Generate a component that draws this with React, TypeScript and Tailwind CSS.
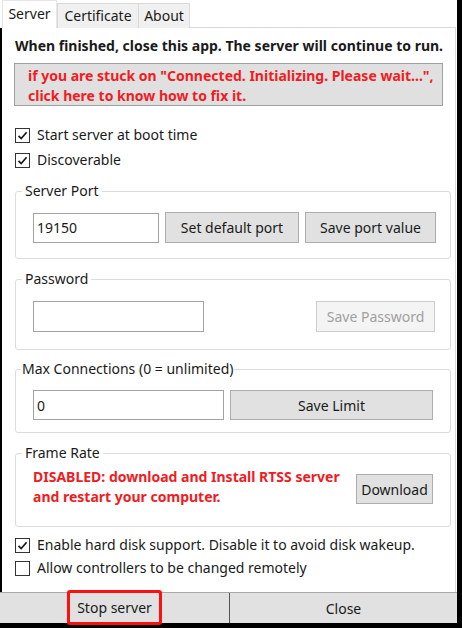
import React from "react";

function Check({ checked }: { checked: boolean }) {
  return (
    <span className="w-[15px] h-[15px] border border-[#333333] bg-white flex items-center justify-center shrink-0">
      {checked && (
        <svg width="13" height="13" viewBox="0 0 13 13">
          <path d="M2.5 6.8 L5.2 9.6 L10.6 3.2" stroke="#1a1a1a" strokeWidth="1.7" fill="none" />
        </svg>
      )}
    </span>
  );
}

function CheckRow({ checked, label, className }: { checked: boolean; label: string; className?: string }) {
  return (
    <div className={"flex items-center h-[20px] pl-[15px] gap-[7px] " + (className ?? "")}>
      <Check checked={checked} />
      <span className="leading-[20px]">{label}</span>
    </div>
  );
}

function Btn({ label, className, disabled }: { label: string; className: string; disabled?: boolean }) {
  return (
    <div
      className={
        "flex items-center justify-center border " +
        (disabled ? "bg-[#f4f4f4] border-[#cccccc] text-[#a0a0a0] " : "bg-[#e1e1e1] border-[#adadad] text-[#1a1a1a] ") +
        className
      }
    >
      {label}
    </div>
  );
}

function TextBox({ value, className }: { value: string; className: string }) {
  return (
    <div className={"flex items-center border border-[#a2a2a2] bg-white pl-[3px] " + className}>{value}</div>
  );
}

export default function App() {
  return (
    <div className="w-[462px] h-[628px] bg-black overflow-hidden font-['Noto_Sans',sans-serif] text-[14px] text-[#1a1a1a]">
      <div className="w-[457px] h-[623px] bg-white flex flex-col">
        {/* tabs */}
        <div className="flex items-end h-[28px] pl-[2px] shrink-0">
          <div className="w-[55px] h-[28px] bg-white border-t border-l border-r border-[#e6e6e6] flex items-center justify-center leading-none pb-[1px]">
            Server
          </div>
          <div className="w-[82px] h-[25px] bg-[#f0f0f0] border border-[#d9d9d9] border-b-0 flex items-center justify-center leading-none">
            Certificate
          </div>
          <div className="w-[51px] h-[25px] bg-[#f0f0f0] border border-[#d9d9d9] border-b-0 border-l-0 flex items-center justify-center leading-none">
            About
          </div>
          <div className="flex-1 h-[1px] bg-[#d9d9d9] mr-[1px]" />
        </div>

        {/* panel */}
        <div className="w-[456px] flex-1 flex flex-col border-l-2 border-l-black border-r border-r-[#d9d9d9]">
          <div className="mt-[9px] pl-[13px] font-bold leading-[18px] whitespace-nowrap">
            When finished, close this app. The server will continue to run.
          </div>
          <div className="mt-[8px] ml-[12px] w-[429px] h-[43px] bg-[#e0e0e0] border border-[#a0a0a0] pl-[13px] pt-[2px] font-bold text-[#f01c24] leading-[20px] whitespace-nowrap">
            <div>if you are stuck on "Connected. Initializing. Please wait...",</div>
            <div>click here to know how to fix it.</div>
          </div>

          <CheckRow checked label="Start server at boot time" className="mt-[19px] -ml-[2px]" />
          <CheckRow checked label="Discoverable" className="mt-[5px] -ml-[2px]" />

          {/* Server Port */}
          <fieldset className="mt-[12px] ml-[13px] w-[436px] border border-[#dcdcdc] rounded-[3px] pl-[17px] pr-[14px] pt-[12px] pb-[15px]">
            <legend className="-ml-[11px] px-[3px] leading-[18px]">Server Port</legend>
            <div className="flex items-center">
              <TextBox value="19150" className="w-[126px] h-[30px]" />
              <Btn label="Set default port" className="ml-[6px] w-[134px] h-[31px]" />
              <Btn label="Save port value" className="ml-[6px] w-[131px] h-[31px]" />
            </div>
          </fieldset>

          {/* Password */}
          <fieldset className="mt-[11px] ml-[13px] w-[436px] border border-[#dcdcdc] rounded-[3px] pl-[17px] pr-[15px] pt-[13px] pb-[17px]">
            <legend className="-ml-[11px] px-[3px] leading-[18px]">Password</legend>
            <div className="flex items-center justify-between">
              <TextBox value="" className="w-[171px] h-[31px]" />
              <Btn label="Save Password" disabled className="w-[119px] h-[31px]" />
            </div>
          </fieldset>

          {/* Max Connections */}
          <fieldset className="mt-[10px] ml-[13px] w-[436px] border border-[#dcdcdc] rounded-[3px] pl-[17px] pr-[17px] pt-[12px] pb-[12px]">
            <legend className="-ml-[12px] px-[1px] leading-[18px]">Max Connections (0 = unlimited)</legend>
            <div className="flex items-center justify-between">
              <TextBox value="0" className="w-[191px] h-[30px]" />
              <Btn label="Save Limit" className="w-[203px] h-[30px]" />
            </div>
          </fieldset>

          {/* Frame Rate */}
          <fieldset className="mt-[11px] ml-[13px] w-[436px] border border-[#dcdcdc] rounded-[3px] pl-[17px] pr-[17px] pt-[5px] pb-[19px]">
            <legend className="-ml-[11px] px-[3px] leading-[18px]">Frame Rate</legend>
            <div className="flex items-start justify-between">
              <div className="font-bold text-[#f01c24] leading-[20px] whitespace-nowrap">
                <div>DISABLED: download and Install RTSS server</div>
                <div>and restart your computer.</div>
              </div>
              <Btn label="Download" className="mt-[7px] w-[77px] h-[30px]" />
            </div>
          </fieldset>

          <CheckRow checked label="Enable hard disk support. Disable it to avoid disk wakeup." className="mt-[8px] -ml-[2px]" />
          <CheckRow checked={false} label="Allow controllers to be changed remotely" className="mt-[3px] -ml-[2px]" />
          <div className="flex-1" />
        </div>

        {/* bottom buttons */}
        <div className="h-[31px] shrink-0 flex border-t border-[#a8a8a8] bg-[#e1e1e1]">
          <div className="w-[230px] flex items-center justify-center border-r border-[#555555]">
            <span className="-mt-[3px] -mb-[1px] h-[35px] px-[7px] flex items-center border-[3px] border-[#ff1010] rounded-[3px]">
              Stop server
            </span>
          </div>
          <div className="flex-1 flex items-center justify-center">Close</div>
        </div>
      </div>
    </div>
  );
}
